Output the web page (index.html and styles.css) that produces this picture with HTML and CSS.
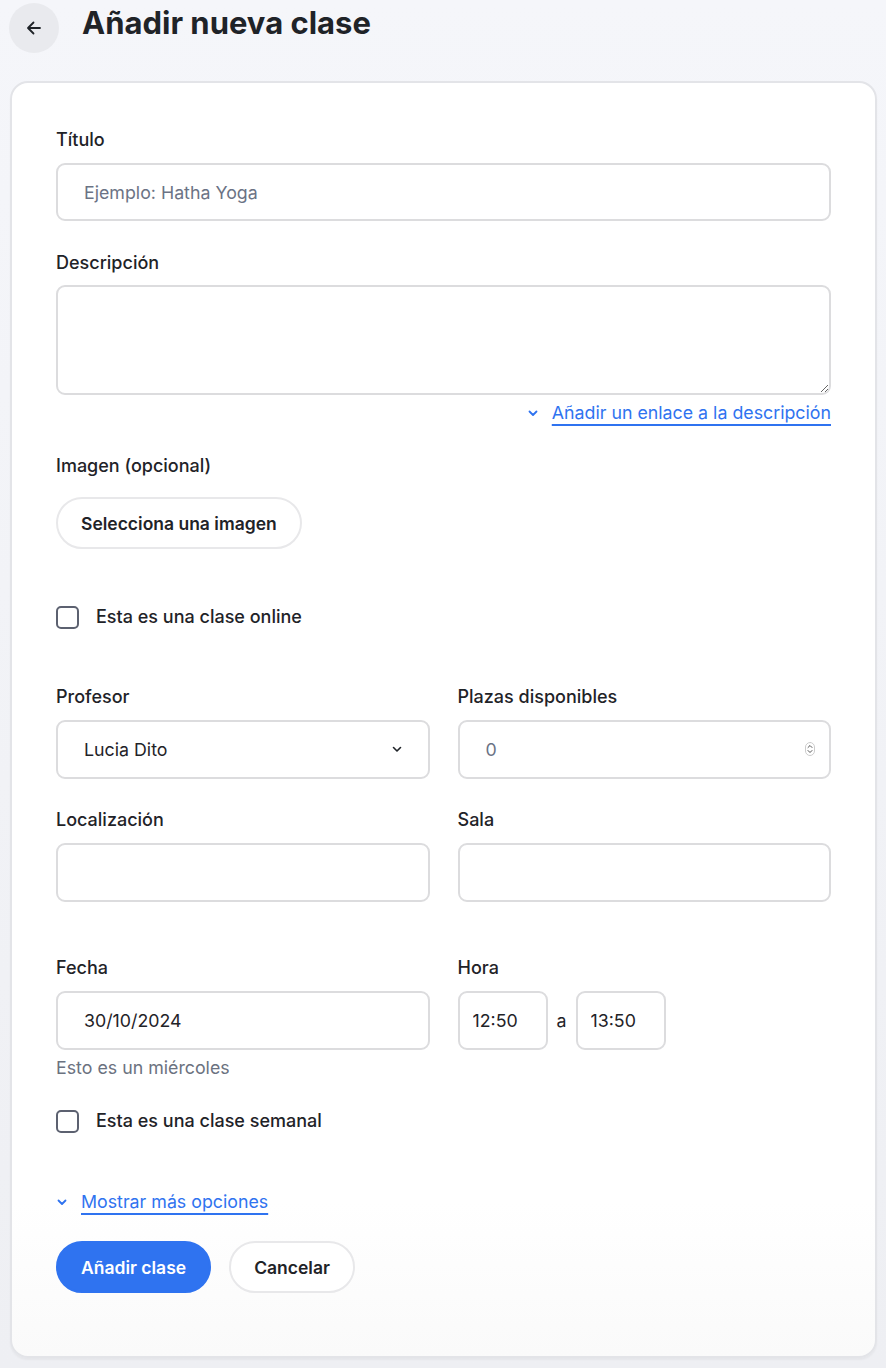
FILE: index.html
```html
<!DOCTYPE html>
<html lang="es">
<head>
  <meta charset="UTF-8">
  <title>Añadir nueva clase</title>
  <link rel="stylesheet" href="styles.css">
</head>
<body>

  <!-- cabecera -->
  <header class="page-head">
    <button class="back-btn" aria-label="Volver">
      <svg width="20" height="20" viewBox="0 0 20 20" fill="none" stroke="#1f2328" stroke-width="1.8" stroke-linecap="round" stroke-linejoin="round">
        <path d="M16 10H4.5M9.5 4.5L4 10l5.5 5.5"/>
      </svg>
    </button>
    <h1>Añadir nueva clase</h1>
  </header>

  <!-- formulario -->
  <main class="card">
    <div class="field">
      <label>Título</label>
      <input type="text" class="input" placeholder="Ejemplo: Hatha Yoga">
    </div>

    <div class="field field-desc">
      <label>Descripción</label>
      <textarea class="input textarea"></textarea>
      <div class="link-row right">
        <a href="#" class="toggle-link">
          <svg width="12" height="12" viewBox="0 0 12 12" fill="none" stroke="#2f73f0" stroke-width="1.8" stroke-linecap="round" stroke-linejoin="round"><path d="M2.5 4.5L6 8l3.5-3.5"/></svg>
          <span>Añadir un enlace a la descripción</span>
        </a>
      </div>
    </div>

    <div class="field field-img">
      <label>Imagen (opcional)</label>
      <button class="pill-btn">Selecciona una imagen</button>
    </div>

    <label class="check check-online">
      <span class="box"></span>
      Esta es una clase online
    </label>

    <div class="row row-first">
      <div class="field">
        <label>Profesor</label>
        <div class="select-wrap">
          <div class="input select">Lucia Dito</div>
          <svg class="select-arrow" width="14" height="14" viewBox="0 0 14 14" fill="none" stroke="#1f2328" stroke-width="1.6" stroke-linecap="round" stroke-linejoin="round"><path d="M3.5 5.5L7 9l3.5-3.5"/></svg>
        </div>
      </div>
      <div class="field">
        <label>Plazas disponibles</label>
        <div class="select-wrap">
          <input type="text" class="input" placeholder="0">
          <span class="spinner">
            <svg width="10" height="14" viewBox="0 0 10 14" fill="none" stroke="#555" stroke-width="1" stroke-linecap="round" stroke-linejoin="round">
              <rect x="0.5" y="0.5" width="9" height="13" rx="4.5" stroke="#ccc"/>
              <path d="M3 5.5L5 3.5l2 2M3 8.5L5 10.5l2-2"/>
            </svg>
          </span>
        </div>
      </div>
    </div>

    <div class="row">
      <div class="field">
        <label>Localización</label>
        <input type="text" class="input">
      </div>
      <div class="field">
        <label>Sala</label>
        <input type="text" class="input">
      </div>
    </div>

    <div class="row row-date">
      <div class="field">
        <label>Fecha</label>
        <input type="text" class="input" value="30/10/2024">
        <p class="hint">Esto es un miércoles</p>
      </div>
      <div class="field">
        <label>Hora</label>
        <div class="time-row">
          <input type="text" class="input time" value="12:50">
          <span class="to">a</span>
          <input type="text" class="input time" value="13:50">
        </div>
      </div>
    </div>

    <label class="check check-week">
      <span class="box"></span>
      Esta es una clase semanal
    </label>

    <div class="link-row more">
      <a href="#" class="toggle-link">
        <svg width="12" height="12" viewBox="0 0 12 12" fill="none" stroke="#2f73f0" stroke-width="1.8" stroke-linecap="round" stroke-linejoin="round"><path d="M2.5 4.5L6 8l3.5-3.5"/></svg>
        <span>Mostrar más opciones</span>
      </a>
    </div>

    <div class="actions">
      <button class="pill-btn primary">Añadir clase</button>
      <button class="pill-btn">Cancelar</button>
    </div>
  </main>

</body>
</html>
```

FILE: styles.css
```css
/* ─── base ─── */
* { box-sizing: border-box; margin:0; padding:0; }
html, body {
  font-family: Inter, "Noto Sans", sans-serif;
  color:#1f2328;
  background: linear-gradient(#f5f6fa, #eeeff3);
  min-height:100%;
}
body { padding:3px 9px 10px 10px; }

/* ─── cabecera ─── */
.page-head {
  display:flex; align-items:center; gap:23px;
  height:50px; margin-bottom:28px;
}
.back-btn {
  width:50px; height:50px; border-radius:50%;
  border:none; background:#e9eaee;
  display:flex; align-items:center; justify-content:center;
  margin-left:-1px;
}
.page-head h1 {
  font-size:31px; font-weight:700;
  margin-top:-12px;
}

/* ─── tarjeta ─── */
.card {
  background: linear-gradient(#fff 88%, #fafafa);
  border:2px solid #e3e4e8; border-radius:18px;
  padding:45px 44px 63px;
  box-shadow: 0 2px 2px rgba(0,0,0,0.04);
}

.field label {
  display:block; font-size:18px; font-weight:500;
  line-height:24px; margin-bottom:11px;
}
.field { margin-bottom:30px; }
.field-desc label { margin-bottom:10px; }
.field-desc { margin-bottom:29px; }

.input {
  display:block; width:100%; height:58px;
  border:2px solid #dcdcde; border-radius:9px;
  padding:0 26px; background:#fff;
  font-family:inherit; font-size:17.8px; color:#1f2328;
  outline:none;
}
.input::placeholder { color:#6b7385; }
.textarea { height:110px; padding:14px 26px; resize:vertical; }

/* enlaces desplegables */
.link-row { display:flex; margin-top:6px; }
.link-row.right { justify-content:flex-end; }
.toggle-link {
  display:inline-flex; align-items:center; gap:13px;
  color:#2f73f0; font-size:17.8px; line-height:24px;
  text-decoration:none;
}
.toggle-link span {
  text-decoration:underline; text-decoration-thickness:1.5px;
  text-underline-offset:5px;
}

/* botones */
.field-img label { margin-bottom:19px; }
.field-img { margin-bottom:56px; }
.pill-btn {
  height:52px; padding:0 23px; border-radius:26px;
  border:2px solid #e8e8ea; background:#fff;
  font-family:inherit; font-size:17.5px; font-weight:600; color:#1f2328;
}
.pill-btn.primary {
  background:#2f73f0; border-color:#2f73f0; color:#fff;
}

/* casillas */
.check {
  display:flex; align-items:center; gap:17px;
  font-size:18px; font-weight:500; line-height:24px;
}
.check .box {
  width:23px; height:23px; border:2px solid #5c6170;
  border-radius:5px; background:#fff;
}
.check-online { margin-bottom:56px; }
.check-week { margin-top:29px; margin-bottom:57px; }

/* filas de dos columnas */
.row {
  display:grid; grid-template-columns:1fr 1fr; gap:28px;
}
.row .field { margin-bottom:29px; }
.row .field .input { height:59px; }
.row-date { margin-top:25px; }
.row-date .field { margin-bottom:0; }

.select-wrap { position:relative; }
.select { display:flex; align-items:center; }
.select-arrow { position:absolute; right:26px; top:22px; }
.spinner { position:absolute; right:16px; top:22px; display:flex; }

.hint { color:#6b7280; font-size:17.8px; line-height:24px; margin-top:6px; }

.time-row { display:flex; align-items:center; gap:9px; }
.input.time { width:90px; padding:0 13px; }
.to { font-size:17.8px; }

.actions { display:flex; gap:18px; margin-top:27px; }
```
